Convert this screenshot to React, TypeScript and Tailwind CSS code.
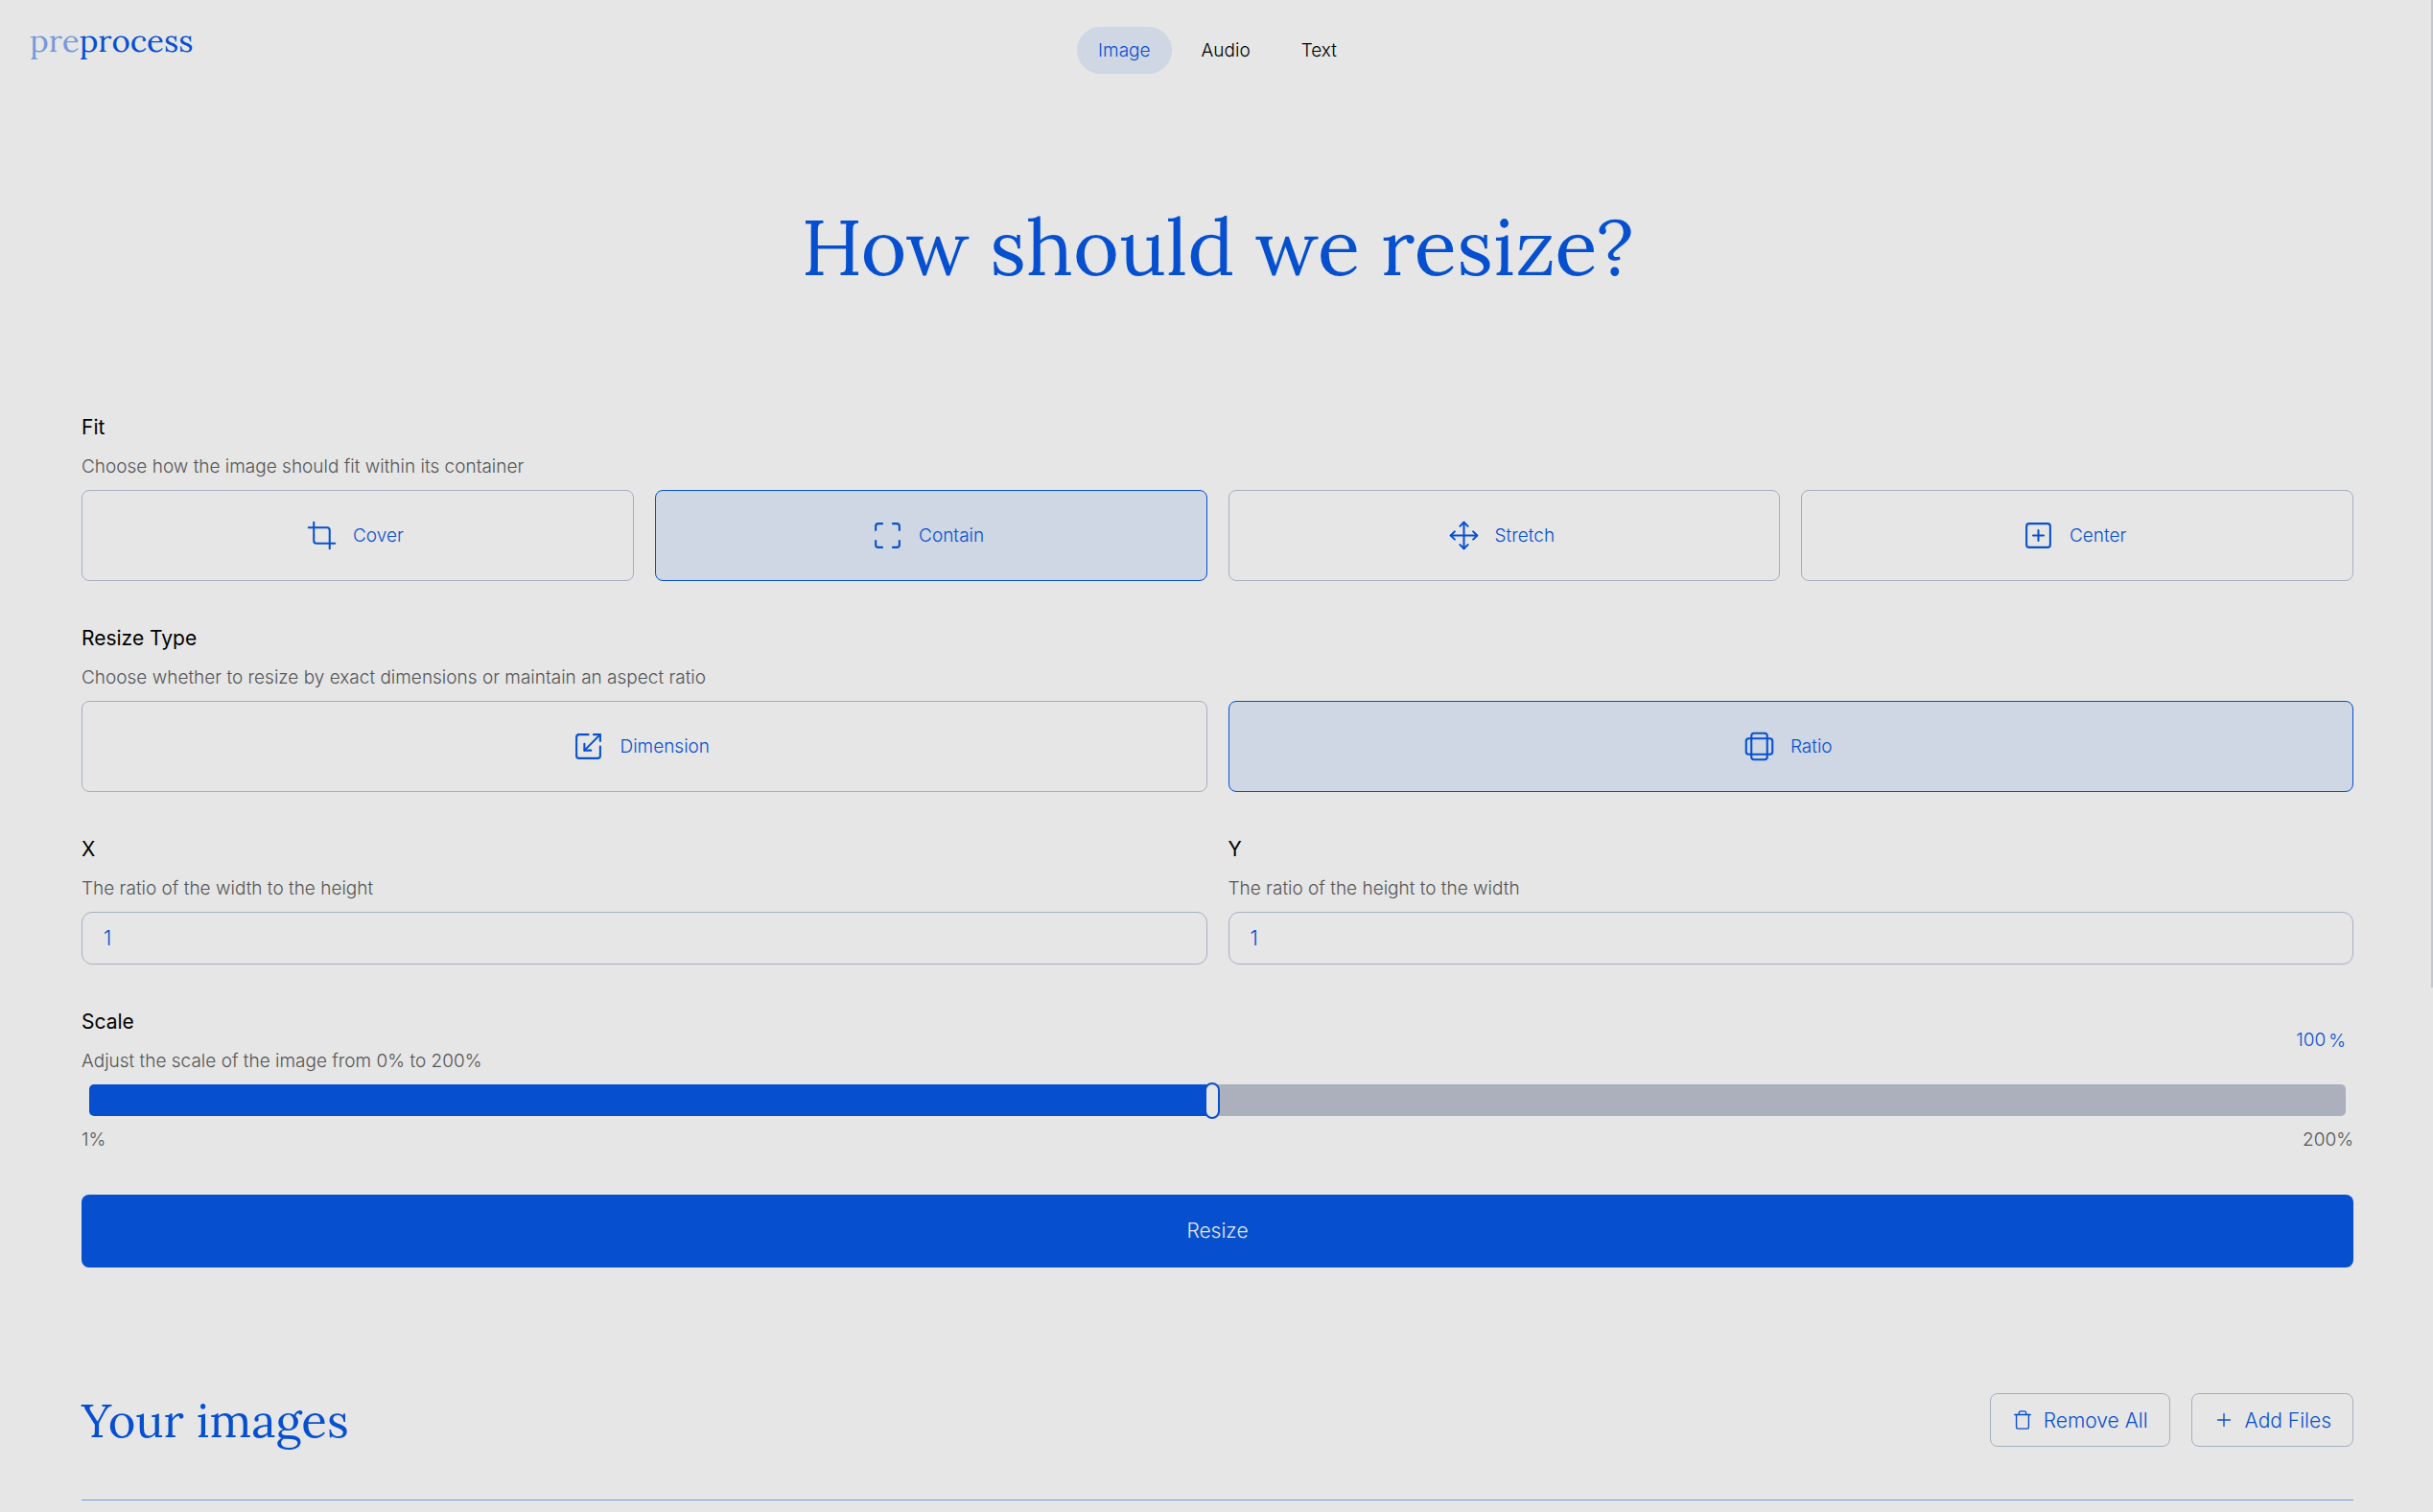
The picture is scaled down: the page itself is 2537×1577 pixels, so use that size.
import { useId, useState, type ReactNode } from "react";
import {
  Crop,
  Maximize,
  Move,
  Plus,
  Ratio,
  Scaling,
  SquarePlus,
  Trash,
  type LucideIcon,
} from "lucide-react";

type Choice = { label: string; icon: LucideIcon };

const tabs = ["Image", "Audio", "Text"];

const fits: Choice[] = [
  { label: "Cover", icon: Crop },
  { label: "Contain", icon: Maximize },
  { label: "Stretch", icon: Move },
  { label: "Center", icon: SquarePlus },
];

const resizeTypes: Choice[] = [
  { label: "Dimension", icon: Scaling },
  { label: "Ratio", icon: Ratio },
];

function Title({ children }: { children: ReactNode }) {
  return <span className="block text-[21px] leading-8 font-normal text-black">{children}</span>;
}

function Hint({ children }: { children: ReactNode }) {
  return <span className="block text-[19px] leading-[27px] text-[#555555]">{children}</span>;
}

function ChoiceGroup({
  title,
  hint,
  choices,
  initial,
  columns,
}: {
  title: string;
  hint: string;
  choices: Choice[];
  initial: string;
  columns: string;
}) {
  const [selected, setSelected] = useState(initial);
  const id = useId();
  return (
    <section aria-labelledby={id} className="flex flex-col gap-[11px]">
      <h2 id={id}>
        <Title>{title}</Title>
      </h2>
      <Hint>{hint}</Hint>
      <div className={`grid gap-[22px] ${columns}`}>
        {choices.map(({ label, icon: Icon }) => (
          <button
            key={label}
            type="button"
            aria-pressed={selected === label}
            onClick={() => setSelected(label)}
            className={`flex h-[95px] items-center justify-center gap-4 rounded-lg border text-[19px] text-[#0650d0] ${
              selected === label ? "border-[#0650d0] bg-[#cfd6e4]" : "border-[#a7afbd]"
            }`}
          >
            <Icon size={33} strokeWidth={1.5} aria-hidden="true" />
            <span className="pt-0.5 pr-1.5">{label}</span>
          </button>
        ))}
      </div>
    </section>
  );
}

function NumberField({ title, hint }: { title: string; hint: string }) {
  const id = useId();
  return (
    <div className="flex flex-col gap-[11px]">
      <label htmlFor={id}>
        <Title>{title}</Title>
      </label>
      <Hint>{hint}</Hint>
      <input
        id={id}
        type="text"
        inputMode="numeric"
        defaultValue="1"
        className="h-[55px] w-full rounded-[11px] border border-[#a7afbd] bg-transparent px-[22px] text-[21px] text-[#0650d0]"
      />
    </div>
  );
}

function ScaleField() {
  const id = useId();
  const [scale, setScale] = useState(100);
  const filled = ((scale - 1) / 199) * 100;
  return (
    <div className="flex flex-col gap-[11px]">
      <div className="flex items-center justify-between">
        <div className="flex flex-col gap-[11px]">
          <label htmlFor={id}>
            <Title>Scale</Title>
          </label>
          <Hint>Adjust the scale of the image from 0% to 200%</Hint>
        </div>
        <div className="flex items-center gap-[3px] pr-2 text-[#0650d0]">
          <input
            type="text"
            inputMode="numeric"
            aria-label="Scale percentage"
            value={scale}
            onChange={(e) => setScale(Math.min(200, Number(e.target.value) || 1))}
            className="w-12 bg-transparent text-right text-[19px]"
          />
          <span className="pt-0.5 text-[19px]">%</span>
        </div>
      </div>
      <div className="flex px-2">
        <input
          id={id}
          type="range"
          min={1}
          max={200}
          value={scale}
          onChange={(e) => setScale(Number(e.target.value))}
          style={{
            backgroundImage: `linear-gradient(to right, #0650d0 ${filled}%, #acb0bc ${filled}%)`,
          }}
          className="h-[33px] w-full appearance-none rounded-[5px] [&::-webkit-slider-thumb]:h-[38px] [&::-webkit-slider-thumb]:w-4 [&::-webkit-slider-thumb]:appearance-none [&::-webkit-slider-thumb]:rounded-full [&::-webkit-slider-thumb]:border-2 [&::-webkit-slider-thumb]:border-[#0650d0] [&::-webkit-slider-thumb]:bg-[#e6e6e6]"
        />
      </div>
      <div className="flex justify-between">
        <Hint>1%</Hint>
        <Hint>200%</Hint>
      </div>
    </div>
  );
}

function OutlineButton({ icon: Icon, label }: { icon: LucideIcon; label: string }) {
  return (
    <button
      type="button"
      className="flex h-14 items-center gap-[11px] rounded-lg border border-[#a7afbd] px-[22px] text-[21px]"
    >
      <Icon size={22} strokeWidth={1.5} aria-hidden="true" />
      <span className="pt-0.5">{label}</span>
    </button>
  );
}

export default function App() {
  return (
    <div className="min-h-screen bg-[#e6e6e6] font-[Inter,'Liberation_Sans',sans-serif] font-light">
      <header className="grid grid-cols-[1fr_auto_1fr] items-start pt-[22px] pr-[29px] pl-[31px]">
        <a
          href="#"
          className="justify-self-start font-[Lora,'Liberation_Serif',serif] text-[33px] leading-10 font-normal text-[#0650d0]"
        >
          <span className="opacity-50">pre</span>process
        </a>
        <nav className="flex gap-[9px] pt-1.5">
          {tabs.map((tab, i) => (
            <a
              key={tab}
              href="#"
              aria-current={i === 0 ? "page" : undefined}
              className={`rounded-full px-[22px] text-[19px] leading-[49px] ${
                i === 0 ? "bg-[#cfd6e4] text-[#0650d0]" : "text-black"
              }`}
            >
              {tab}
            </a>
          ))}
        </nav>
      </header>

      <main className="pt-[139px] pr-[83px] pl-[85px]">
        <h1 className="text-center font-[Lora,'Liberation_Serif',serif] text-[82px] leading-[82px] font-normal text-[#0650d0]">
          How should we resize?
        </h1>

        <form className="mt-[132px] flex flex-col gap-11" onSubmit={(e) => e.preventDefault()}>
          <ChoiceGroup
            title="Fit"
            hint="Choose how the image should fit within its container"
            choices={fits}
            initial="Contain"
            columns="grid-cols-4"
          />
          <ChoiceGroup
            title="Resize Type"
            hint="Choose whether to resize by exact dimensions or maintain an aspect ratio"
            choices={resizeTypes}
            initial="Ratio"
            columns="grid-cols-2"
          />
          <div className="grid grid-cols-2 gap-[22px]">
            <NumberField title="X" hint="The ratio of the width to the height" />
            <NumberField title="Y" hint="The ratio of the height to the width" />
          </div>
          <ScaleField />
          <button
            type="submit"
            className="h-[76px] rounded-lg bg-[#0650d0] text-[21px] text-[#e6e6e6]"
          >
            Resize
          </button>
        </form>

        <section className="mt-[126px] border-b border-[#769bdb] pb-[50px] text-[#0650d0]">
          <div className="flex items-center justify-between">
            <h2 className="font-[Lora,'Liberation_Serif',serif] text-[49px] leading-[66px] font-normal">
              Your images
            </h2>
            <div className="flex gap-[22px]">
              <OutlineButton icon={Trash} label="Remove All" />
              <OutlineButton icon={Plus} label="Add Files" />
            </div>
          </div>
        </section>
      </main>

      <div aria-hidden="true" className="fixed top-0 right-0 h-[1030px] w-0.5 bg-[#c4c6cb]" />
    </div>
  );
}
